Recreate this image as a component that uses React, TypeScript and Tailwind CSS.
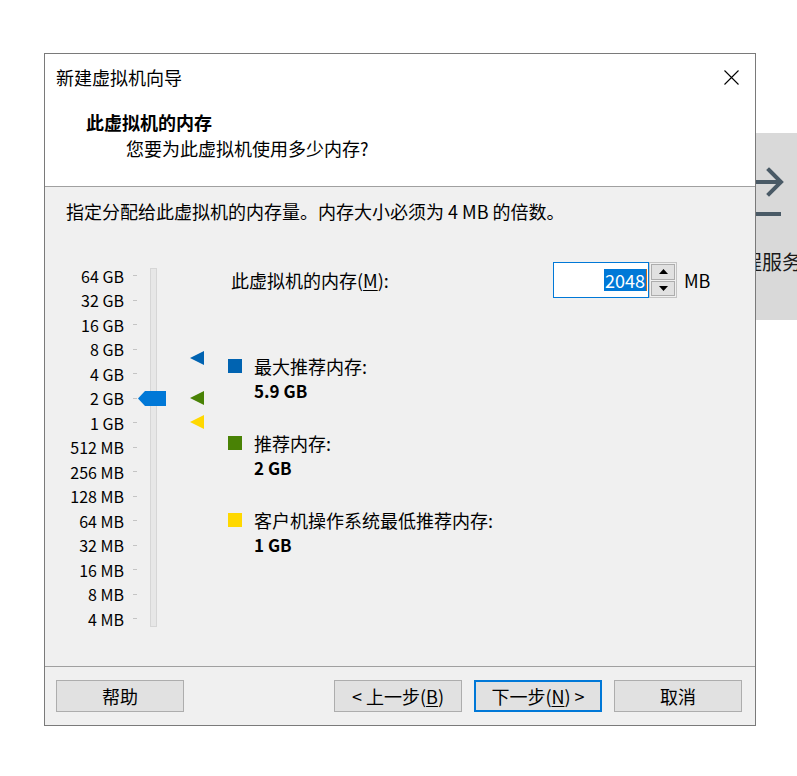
import React from "react";

const labels = [
  "64 GB", "32 GB", "16 GB", "8 GB", "4 GB", "2 GB", "1 GB",
  "512 MB", "256 MB", "128 MB", "64 MB", "32 MB", "16 MB", "8 MB", "4 MB",
];

function Tri({ color }: { color: string }) {
  return (
    <svg width="14" height="14" viewBox="0 0 14 14">
      <polygon points="0,7 14,0 14,14" fill={color} />
    </svg>
  );
}

function Legend({ color, title, value }: { color: string; title: string; value: string }) {
  return (
    <div className="flex flex-col">
      <div className="flex h-[25px] items-center">
        <div className="h-[14px] w-[14px]" style={{ background: color }} />
        <span className="ml-[12px]">{title}</span>
      </div>
      <div className="flex h-[25px] items-center pl-[26px] text-[17px] font-bold">{value}</div>
    </div>
  );
}

function Btn({ children, primary }: { children: React.ReactNode; primary?: boolean }) {
  return (
    <div
      className={
        primary
          ? "flex h-[32px] w-[128px] items-center justify-center border-2 border-[#0078d7] bg-[#e1e1e1]"
          : "flex h-[32px] w-[128px] items-center justify-center border border-[#adadad] bg-[#e1e1e1]"
      }
    >
      {children}
    </div>
  );
}

export default function App() {
  return (
    <div className="relative h-[776px] w-[797px] overflow-hidden bg-white font-['Noto_Sans_CJK_SC',sans-serif] text-[18px] leading-[24px] text-black">
      {/* background window panel behind dialog */}
      <div className="absolute left-[700px] top-[133px] h-[187px] w-[97px] bg-[#d9d9d9]">
        <svg width="97" height="90" viewBox="0 0 97 90" className="absolute left-0 top-0">
          <path d="M40 49 H80 M69 37 L81 49 L69 61" stroke="#4a5a66" strokeWidth="4" fill="none" strokeLinecap="square" />
          <path d="M40 81 H81" stroke="#4a5a66" strokeWidth="4" fill="none" />
        </svg>
        <div className="absolute left-[22px] top-[116px] whitespace-nowrap text-[20px] leading-[26px] text-[#1a1a1a]">远程服务</div>
      </div>

      <div className="relative pl-[44px] pt-[53px]">
        <div className="relative z-10 flex h-[673px] w-[712px] flex-col border border-[#7a7a7a] bg-white">
          {/* header white area */}
          <div className="flex h-[133px] flex-col border-b border-[#a0a0a0]">
            <div className="flex h-[46px] items-center justify-between pl-[11px] pr-[16px]">
              <span>新建虚拟机向导</span>
              <svg width="15" height="15" viewBox="0 0 15 15">
                <path d="M0.5 0.5 L14.5 14.5 M14.5 0.5 L0.5 14.5" stroke="#000" strokeWidth="1.1" />
              </svg>
            </div>
            <div className="pl-[41px] pt-[10px] font-bold">此虚拟机的内存</div>
            <div className="mt-[2px] pl-[81px]">您要为此虚拟机使用多少内存?</div>
          </div>

          {/* body */}
          <div className="flex flex-1 flex-col bg-[#f0f0f0]">
            <div className="pl-[21px] pt-[12px]">指定分配给此虚拟机的内存量。内存大小必须为 4 MB 的倍数。</div>
            <div className="mt-[38px] flex">
              {/* slider */}
              <div className="relative flex h-[370px] w-[175px]">
                <div className="flex w-[79px] flex-col items-end pt-[2.75px] text-[16px]">
                  {labels.map((l) => (
                    <div key={l} className="flex h-[24.5px] items-center whitespace-nowrap">{l}</div>
                  ))}
                </div>
                <div className="ml-[9px] flex w-[4px] flex-col pt-[2.75px]">
                  {labels.map((l) => (
                    <div key={l} className="flex h-[24.5px] items-center">
                      <div className="h-px w-[4px] bg-[#c4c4c4]" />
                    </div>
                  ))}
                </div>
                <div className="ml-[13px] mt-[7px] h-[359px] w-[7px] border border-[#d6d6d6] bg-[#e7e7e7]" />
                <svg className="absolute left-[93px] top-[130px]" width="28" height="15" viewBox="0 0 28 15">
                  <polygon points="0,7.5 7,0 28,0 28,15 7,15" fill="#0078d7" />
                </svg>
                <div className="absolute left-[145px] top-[90px]"><Tri color="#0063b1" /></div>
                <div className="absolute left-[145px] top-[130px]"><Tri color="#498205" /></div>
                <div className="absolute left-[145px] top-[154px]"><Tri color="#ffd800" /></div>
              </div>

              {/* right content */}
              <div className="ml-[8px] flex flex-col">
                <div className="mt-[1px] flex h-[36px] items-center">
                  <span className="ml-[3px] w-[322px]">
                    此虚拟机的内存(<span className="underline underline-offset-2">M</span>):
                  </span>
                  <div className="flex h-[36px] w-[96px] items-center justify-end border border-[#0078d7] bg-white pr-[1px]">
                    <span className="bg-[#0078d7] px-[1px] text-[18px] leading-[22px] text-white">2048</span>
                    <span className="h-[22px] w-px bg-[#c86a1a]" />
                  </div>
                  <div className="flex h-[36px] w-[28px] flex-col gap-[1px] border border-[#c4c4c4] bg-[#f0f0f0] p-[1px]">
                    <div className="flex flex-1 items-center justify-center border border-[#adadad] bg-[#e1e1e1]">
                      <svg width="9" height="5" viewBox="0 0 9 5"><polygon points="4.5,0 9,5 0,5" fill="#000" /></svg>
                    </div>
                    <div className="flex flex-1 items-center justify-center border border-[#adadad] bg-[#e1e1e1]">
                      <svg width="9" height="5" viewBox="0 0 9 5"><polygon points="0,0 9,0 4.5,5" fill="#000" /></svg>
                    </div>
                  </div>
                  <span className="ml-[7px]">MB</span>
                </div>
                <div className="mt-[55px] flex flex-col gap-[27px]">
                  <Legend color="#0063b1" title="最大推荐内存:" value="5.9 GB" />
                  <Legend color="#498205" title="推荐内存:" value="2 GB" />
                  <Legend color="#ffd800" title="客户机操作系统最低推荐内存:" value="1 GB" />
                </div>
              </div>
            </div>
          </div>

          {/* footer */}
          <div className="flex h-[59px] items-start justify-between border-t border-[#a0a0a0] bg-[#f0f0f0] pl-[11px] pr-[13px] pt-[13px]">
            <Btn>帮助</Btn>
            <div className="flex gap-[12px]">
              <Btn>&lt; 上一步(<span className="underline underline-offset-2">B</span>)</Btn>
              <Btn primary>下一步(<span className="underline underline-offset-2">N</span>) &gt;</Btn>
              <Btn>取消</Btn>
            </div>
          </div>
        </div>
      </div>
    </div>
  );
}
